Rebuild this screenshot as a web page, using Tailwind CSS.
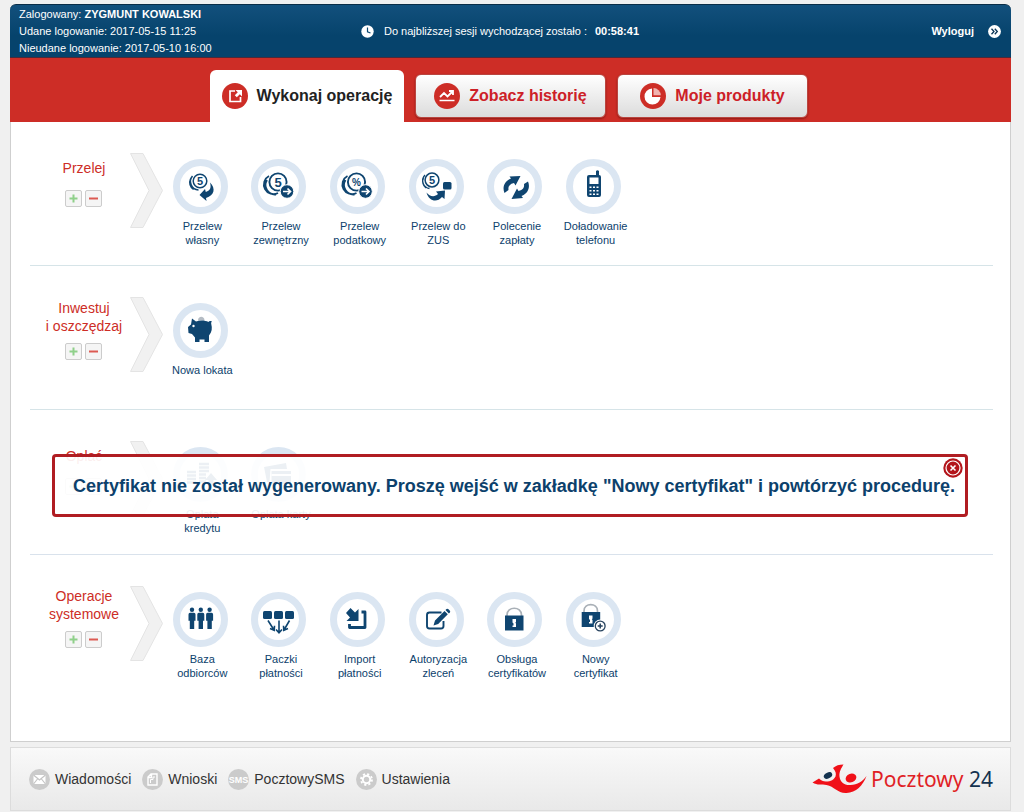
<!DOCTYPE html>
<html lang="pl">
<head>
<meta charset="utf-8">
<meta name="viewport" content="width=device-width, initial-scale=1">
<title>Pocztowy24</title>
<script src="https://cdn.jsdelivr.net/npm/@tailwindcss/browser@4"></script>
</head>
<body class="min-h-screen bg-[#f0f0f0] pt-1 pr-[13px] pl-2.5 font-['Liberation_Sans',Arial,sans-serif]">

<svg class="hidden" aria-hidden="true">
  <symbol id="ring" viewBox="0 0 55 55"><circle cx="27.5" cy="27.5" r="24" fill="#fff" stroke="#dbe6f2" stroke-width="7"/></symbol>
  <symbol id="chevron" viewBox="0 0 33 75"><path d="M.5.5H13L32.500 37.500 13 74.500H.5L19 37.500Z" fill="#f1f1f1" stroke="#e4e4e4"/></symbol>
  <symbol id="plus" viewBox="0 0 17 17"><path d="M8.500 4.500v8M4.500 8.500h8" stroke="#8fd08a" stroke-width="2"/></symbol>
  <symbol id="minus" viewBox="0 0 17 17"><path d="M4 8.500h9" stroke="#dc5a52" stroke-width="2"/></symbol>
</svg>

<div class="relative">
  <header class="grid min-h-[54px] grid-cols-[1fr_auto_1fr] items-center rounded-t-md border-t border-b border-t-[#0a2d47] border-b-[#4b2a3a] bg-linear-to-b from-[#12507c] to-[#06436c] to-60% pr-2.5 pl-[9px] text-[11px] text-white">
    <div class="leading-[17px]">
      <p>Zalogowany: <b>ZYGMUNT KOWALSKI</b></p>
      <p>Udane logowanie: 2017-05-15 11:25</p>
      <p>Nieudane logowanie: 2017-05-10 16:00</p>
    </div>
    <div class="flex items-center pr-5">
      <svg class="mr-2.5 size-[13px]" viewBox="0 0 13 13"><circle cx="6.500" cy="6.500" r="6.200" fill="#fff"/><path d="M6.500 2.500v4.300l3 1.200" fill="none" stroke="#0a4871" stroke-width="1.200"/></svg>
      <span class="mr-2">Do najbliższej sesji wychodzącej zostało :</span>
      <b>00:58:41</b>
    </div>
    <a href="#" class="flex items-center gap-[14px] justify-self-end font-bold">Wyloguj
      <svg class="size-[13px]" viewBox="0 0 13 13"><circle cx="6.500" cy="6.500" r="6.400" fill="#fff"/><path d="M3.500 3.700 6 6.500 3.500 9.300M6.800 3.700 9.300 6.500 6.800 9.300" fill="none" stroke="#0a3556" stroke-width="1.300"/></svg>
    </a>
  </header>

  <nav class="flex min-h-16 items-start justify-center gap-[11px] bg-[#cd2d26] pr-[3px] text-base font-bold text-[#cd2027]">
    <a href="#" class="mt-3 flex h-[52px] w-[194px] items-center justify-center gap-[9px] rounded-t-md bg-white text-[#222]">
      <svg class="size-[26px]" viewBox="0 0 26 26"><circle cx="13" cy="13" r="13" fill="#cd2d26"/><path d="M13 8H8v10.500h10.500V14" fill="none" stroke="#fff" stroke-width="1.700"/><path d="M13.500 7H20v6.500l-2.200-2.200-3 3-2-2 3-3Z" fill="#fff"/></svg>
      Wykonaj operację</a>
    <a href="#" class="mt-4 flex h-11 w-[191px] items-center justify-center gap-[9px] rounded-md border border-[#b9453f] bg-linear-to-b from-white to-[#dcdcdc] shadow-[0_1px_2px_#8d1a15]">
      <svg class="size-[26px]" viewBox="0 0 26 26"><circle cx="13" cy="13" r="13" fill="#cd2d26"/><path d="m6 14 4-4 3.500 3.500L18.500 8.500M15 8h4v4" fill="none" stroke="#fff" stroke-width="1.800"/><path d="M5.500 17.500h15" stroke="#fff" stroke-width="1.500"/></svg>
      Zobacz historię</a>
    <a href="#" class="mt-4 flex h-11 w-[191px] items-center justify-center gap-[9px] rounded-md border border-[#b9453f] bg-linear-to-b from-white to-[#dcdcdc] shadow-[0_1px_2px_#8d1a15]">
      <svg class="size-[26px]" viewBox="0 0 26 26"><circle cx="13" cy="13" r="13" fill="#cd2d26"/><path d="M12 5.500a8 8 0 1 0 8.500 8.500H12Z" fill="#fff"/><path d="M13.500 5a7.500 7.500 0 0 1 7.300 7.300h-7.300Z" fill="#f0b3b0"/></svg>
      Moje produkty</a>
  </nav>

  <main class="border border-t-0 border-[#cfcfcf] bg-white pr-[17px] pb-[42px] pl-[19px] text-[11px] leading-[14px] text-[#0c416c]">
    <section class="flex min-h-36 border-b border-[#d6e4e8]">
      <div class="w-[100px] shrink-0 pt-[37px] pl-2 text-center">
        <h2 class="text-sm leading-[18px] text-[#cd2d26]">Przelej</h2>
        <div class="mt-[13px] flex justify-center gap-[3px] pr-0.5">
          <button type="button" aria-label="Dodaj" class="size-[17px] rounded-xs border border-[#ccc] bg-[#f5f5f5]"><svg class="-m-px size-[17px]"><use href="#plus"/></svg></button>
          <button type="button" aria-label="Usuń" class="size-[17px] rounded-xs border border-[#ccc] bg-[#f5f5f5]"><svg class="-m-px size-[17px]"><use href="#minus"/></svg></button>
        </div>
      </div>
      <svg class="mt-[31px] h-[75px] w-[33px] shrink-0"><use href="#chevron"/></svg>
      <ul class="-ml-0.5 grid w-[472px] grid-cols-6 pt-[37px] text-center">
        <li><a href="#" class="flex flex-col items-center gap-[5px]">
          <svg class="size-[55px]" viewBox="0 0 55 55"><use href="#ring"/><circle cx="27" cy="22" r="6.800" fill="#fff" stroke="#0f4570" stroke-width="1.500"/><path d="M19.500 17a8.500 8.500 0 0 0 6 14M17.500 20a8.500 8.500 0 0 0 3 10.500" fill="none" stroke="#0f4570" stroke-width="1.500"/><text x="27" y="26" font-size="11" font-weight="bold" fill="#0f4570" text-anchor="middle">5</text><path d="M37 23.500c6 6 4.500 13-4 15.500l.5 3-7-6 5.500-6 .8 3c5-1.500 5.500-5 4.200-9.500Z" fill="#0f4570"/></svg>
          <span class="pl-1">Przelew<br>własny</span></a></li>
        <li><a href="#" class="flex flex-col items-center gap-[5px]">
          <svg class="size-[55px]" viewBox="0 0 55 55"><use href="#ring"/><path d="M18 17a9.500 9.500 0 0 0 9 17M16 21a9.500 9.500 0 0 0 9 14.500" fill="none" stroke="#0f4570" stroke-width="1.800"/><circle cx="27" cy="23" r="8.600" fill="#fff" stroke="#0f4570" stroke-width="1.900"/><text x="27" y="27.500" font-size="13" font-weight="bold" fill="#0f4570" text-anchor="middle">5</text><circle cx="36" cy="32.500" r="6.800" fill="#0f4570" stroke="#fff"/><path d="M32 32.500h7M36.500 29.500l3 3-3 3" fill="none" stroke="#fff" stroke-width="1.700"/></svg>
          <span class="pl-1">Przelew<br>zewnętrzny</span></a></li>
        <li><a href="#" class="flex flex-col items-center gap-[5px]">
          <svg class="size-[55px]" viewBox="0 0 55 55"><use href="#ring"/><path d="M17.500 17a9.500 9.500 0 0 0 9 17M15.500 21a9.500 9.500 0 0 0 9 14.500" fill="none" stroke="#0f4570" stroke-width="1.800"/><circle cx="26.500" cy="23" r="8.600" fill="#fff" stroke="#0f4570" stroke-width="1.900"/><text x="26.500" y="26.500" font-size="10" font-weight="bold" fill="#0f4570" text-anchor="middle">%</text><circle cx="35.500" cy="32.500" r="6.800" fill="#0f4570" stroke="#fff"/><path d="M31.500 32.500h7M36 29.500l3 3-3 3" fill="none" stroke="#fff" stroke-width="1.700"/></svg>
          <span class="pl-1">Przelew<br>podatkowy</span></a></li>
        <li><a href="#" class="flex flex-col items-center gap-[5px]">
          <svg class="size-[55px]" viewBox="0 0 55 55"><use href="#ring"/><path d="M16 16a8 8 0 0 0 4.500 13.500M14.500 19a8 8 0 0 0 2.500 10" fill="none" stroke="#0f4570" stroke-width="1.300"/><circle cx="23" cy="21" r="6.900" fill="#fff" stroke="#0f4570" stroke-width="1.500"/><text x="23" y="24.800" font-size="11" font-weight="bold" fill="#0f4570" text-anchor="middle">5</text><rect x="34" y="23" width="8.500" height="7.500" rx="1.500" fill="#0f4570"/><path d="M17.500 33.500c3 4 8 5 11.500 1.500l-2-2.500 9-1-.5 8.500-2.500-2c-5 6-13 4.500-15.500-4.500Z" fill="#0f4570"/></svg>
          <span class="pl-1">Przelew do<br>ZUS</span></a></li>
        <li><a href="#" class="flex flex-col items-center gap-[5px]">
          <svg class="size-[55px]" viewBox="0 0 55 55"><use href="#ring"/><path d="M17.500 34c-2.500-6 0-12 6.500-14.500L22.500 17.500l11-.5-5 9.500-1.500-2.500c-4.500 1-6 3.500-5.500 7Z" fill="#0f4570"/><path d="M41 22.500c2.500 6 0 12-6.500 14.500l1.500 2-11.500 1 5.500-10.500 1.500 2.500c4.500-1 6-3.500 5.500-7Z" fill="#0f4570"/></svg>
          <span class="pl-1">Polecenie<br>zapłaty</span></a></li>
        <li><a href="#" class="flex flex-col items-center gap-[5px]">
          <svg class="size-[55px]" viewBox="0 0 55 55"><use href="#ring"/><path d="M30 17v-5q1.500-1.500 3 0v4q2 0 2 2v18q0 2-2 2H23q-2 0-2-2V18q0-2 2-2h7Z" fill="#0f4570"/><path d="M23.500 18.500h9v6.500h-9ZM23.500 27.500h2v1.500h-2Zm3.500 0h2v1.500h-2Zm3.500 0h2v1.500h-2ZM23.500 31h2v1.500h-2Zm3.500 0h2v1.500h-2Zm3.500 0h2v1.500h-2Zm-7 3.500h2V36h-2Zm3.500 0h2V36h-2Zm3.500 0h2V36h-2Z" fill="#fff"/></svg>
          <span class="pl-1">Doładowanie<br>telefonu</span></a></li>
      </ul>
    </section>

    <section class="flex min-h-36 border-b border-[#d6e4e8]">
      <div class="w-[100px] shrink-0 pt-[33px] pl-2 text-center">
        <h2 class="text-sm leading-[18px] text-[#cd2d26]">Inwestuj<br>i oszczędzaj</h2>
        <div class="mt-2 flex justify-center gap-[3px] pr-0.5">
          <button type="button" aria-label="Dodaj" class="size-[17px] rounded-xs border border-[#ccc] bg-[#f5f5f5]"><svg class="-m-px size-[17px]"><use href="#plus"/></svg></button>
          <button type="button" aria-label="Usuń" class="size-[17px] rounded-xs border border-[#ccc] bg-[#f5f5f5]"><svg class="-m-px size-[17px]"><use href="#minus"/></svg></button>
        </div>
      </div>
      <svg class="mt-[31px] h-[75px] w-[33px] shrink-0"><use href="#chevron"/></svg>
      <ul class="-ml-0.5 grid w-[472px] grid-cols-6 pt-[37px] text-center">
        <li><a href="#" class="flex flex-col items-center gap-[5px]">
          <svg class="size-[55px]" viewBox="0 0 55 55"><use href="#ring"/><path d="M25 17.500c0-5 6.500-5 6.500 0Z" fill="#b5bcc4"/><path d="M19 15.500l4 3c4-1.500 9-1.500 12.500.5.500-1 2.500-1.500 3.500-.5-.5.500-1 1-.8 2.200 1.200 4.300.8 8.300-2.200 11.800v6.500h-4.500V36.500h-5V39H22V34.500l-3-3.500-3.500-1L15 24l3-2.500Z" fill="#0f4570"/><circle cx="20.500" cy="23" r="1.200" fill="#fff"/></svg>
          <span class="pl-1 whitespace-nowrap">Nowa lokata</span></a></li>
      </ul>
    </section>

    <section class="flex min-h-[145px] border-b border-[#d9e2ec]">
      <div class="w-[100px] shrink-0 pt-[37px] pl-2 text-center">
        <h2 class="text-sm leading-[18px] text-[#cd2d26]">Opłać</h2>
        <div class="mt-[13px] flex justify-center gap-[3px] pr-0.5">
          <button type="button" aria-label="Dodaj" class="size-[17px] rounded-xs border border-[#ccc] bg-[#f5f5f5]"><svg class="-m-px size-[17px]"><use href="#plus"/></svg></button>
          <button type="button" aria-label="Usuń" class="size-[17px] rounded-xs border border-[#ccc] bg-[#f5f5f5]"><svg class="-m-px size-[17px]"><use href="#minus"/></svg></button>
        </div>
      </div>
      <svg class="mt-[31px] h-[75px] w-[33px] shrink-0"><use href="#chevron"/></svg>
      <ul class="-ml-0.5 grid w-[472px] grid-cols-6 pt-[37px] text-center">
        <li><a href="#" class="flex flex-col items-center gap-[5px]">
          <svg class="size-[55px]" viewBox="0 0 55 55"><use href="#ring"/><path d="M14 25h9M14 28.500h9M14 32h9M14 35.500h9M26 17h10M26 20.500h10M26 24h10M26 27.500h7M26 31h7M26 34.500h7" stroke="#0f4570" stroke-width="2.500"/><path d="m38 26 6 7h-3.500v5h-5v-5H32Z" fill="#0f4570"/></svg>
          <span class="pl-1">Opłata<br>kredytu</span></a></li>
        <li><a href="#" class="flex flex-col items-center gap-[5px]">
          <svg class="size-[55px]" viewBox="0 0 55 55"><use href="#ring"/><path d="m13 20 22-4 1 6H19.500l-1 13H16Z" fill="#0f4570"/><path d="M20.500 24H40v13H20.500Z" fill="#0f4570"/><path d="M20.500 28H40" stroke="#fff" stroke-width="2"/></svg>
          <span class="pl-1 whitespace-nowrap">Opłata karty</span></a></li>
      </ul>
    </section>

    <section class="flex min-h-36">
      <div class="w-[100px] shrink-0 pt-8 pl-2 text-center">
        <h2 class="text-sm leading-[18px] text-[#cd2d26]">Operacje<br>systemowe</h2>
        <div class="mt-2 flex justify-center gap-[3px] pr-0.5">
          <button type="button" aria-label="Dodaj" class="size-[17px] rounded-xs border border-[#ccc] bg-[#f5f5f5]"><svg class="-m-px size-[17px]"><use href="#plus"/></svg></button>
          <button type="button" aria-label="Usuń" class="size-[17px] rounded-xs border border-[#ccc] bg-[#f5f5f5]"><svg class="-m-px size-[17px]"><use href="#minus"/></svg></button>
        </div>
      </div>
      <svg class="mt-[31px] h-[75px] w-[33px] shrink-0"><use href="#chevron"/></svg>
      <ul class="-ml-0.5 grid w-[472px] grid-cols-6 pt-[37px] text-center">
        <li><a href="#" class="flex flex-col items-center gap-[5px]">
          <svg class="size-[55px]" viewBox="0 0 55 55"><use href="#ring"/><g fill="#0f4570"><circle cx="19" cy="17.800" r="2.200"/><path d="M17 20.700h4q1.500 0 1.500 1.700v6.300h-1.300V37h-4.400v-8.300h-1.300v-6.300q0-1.700 1.500-1.700Z"/><circle cx="27.800" cy="17.800" r="2.200"/><path d="M25.800 20.700h4q1.500 0 1.500 1.700v6.300H30V37h-4.400v-8.300h-1.300v-6.300q0-1.700 1.500-1.700Z"/><circle cx="36.600" cy="17.800" r="2.200"/><path d="M34.600 20.700h4q1.500 0 1.500 1.700v6.300h-1.300V37h-4.400v-8.300h-1.300v-6.300q0-1.700 1.500-1.700Z"/></g></svg>
          <span class="pl-1">Baza<br>odbiorców</span></a></li>
        <li><a href="#" class="flex flex-col items-center gap-[5px]">
          <svg class="size-[55px]" viewBox="0 0 55 55"><use href="#ring"/><g fill="#0f4570"><rect x="12" y="19" width="9" height="8" rx="1.500"/><rect x="23" y="19" width="9" height="8" rx="1.500"/><rect x="34" y="19" width="9" height="8" rx="1.500"/></g><path d="m17 28.500 6 9.500M19 36.500l4.200 1.800.3-4.500M28 28.500v12M25 37.500l3 3.300 3-3.300M38.500 28.500 33 38M32.500 33.800l.3 4.500 4.200-1.800" fill="none" stroke="#0f4570" stroke-width="1.600"/></svg>
          <span class="pl-1">Paczki<br>płatności</span></a></li>
        <li><a href="#" class="flex flex-col items-center gap-[5px]">
          <svg class="size-[55px]" viewBox="0 0 55 55"><use href="#ring"/><path d="M31.500 20H35v15.500H19.500V32" fill="none" stroke="#0f4570" stroke-width="2.800" stroke-linejoin="round"/><path d="m20.500 16 4.500 4.500 3.500-3.500v12H16.500l3.500-3.500-4-4.500Z" fill="#0f4570"/></svg>
          <span class="pl-1">Import<br>płatności</span></a></li>
        <li><a href="#" class="flex flex-col items-center gap-[5px]">
          <svg class="size-[55px]" viewBox="0 0 55 55"><use href="#ring"/><path d="M32.500 20.500H20.500q-2.500 0-2.500 2.500v11q0 2.500 2.500 2.500h11.500q2.500 0 2.500-2.500v-5" fill="none" stroke="#0f4570" stroke-width="1.900"/><path d="m24.500 33.500 1.500-5 9.500-9.500 3.300 3.300-9.600 9.600ZM36.500 18l1-1q1-.8 2 .2l1.200 1.200q1 1 .2 2l-1 1Z" fill="#0f4570"/></svg>
          <span class="pl-1">Autoryzacja<br>zleceń</span></a></li>
        <li><a href="#" class="flex flex-col items-center gap-[5px]">
          <svg class="size-[55px]" viewBox="0 0 55 55"><use href="#ring"/><path d="M20 24v-1c0-9 14.500-9 14.500 0v1" fill="none" stroke="#a9b0b7" stroke-width="1.700"/><path d="M18 23.500h18.500v15H18Z" fill="#0f4570"/><path d="M25.500 27h3.500v3l-.7.800.7.800V35h-3.500v-1.500h1v-2l-1-1Z" fill="#fff"/></svg>
          <span class="pl-1">Obsługa<br>certyfikatów</span></a></li>
        <li><a href="#" class="flex flex-col items-center gap-[5px]">
          <svg class="size-[55px]" viewBox="0 0 55 55"><use href="#ring"/><path d="M18 20v-1c0-8.500 13.500-8.500 13.500 0v1" fill="none" stroke="#a9b0b7" stroke-width="1.700"/><path d="M15.700 20h18.500v15H15.700Z" fill="#0f4570"/><path d="M23 23.500h3.500v3l-.7.800.7.800v3.400H23V30h1v-2l-1-1Z" fill="#fff"/><circle cx="34.200" cy="34" r="6.500" fill="#fff"/><circle cx="34.200" cy="34" r="4.900" fill="#fff" stroke="#27435e" stroke-width="1.300"/><path d="M31.700 34h5M34.200 31.500v5" stroke="#27435e" stroke-width="1.500"/></svg>
          <span class="pl-1">Nowy<br>certyfikat</span></a></li>
      </ul>
    </section>
  </main>

  <div role="alertdialog" aria-labelledby="alert-text" class="absolute top-[450px] right-[43px] left-[42px] flex min-h-[63px] items-center rounded-sm border-3 border-[#ac1116]/95 bg-white/92 pl-[18px]">
    <p id="alert-text" class="text-lg font-bold text-[#0c416c]">Certyfikat nie został wygenerowany. Proszę wejść w zakładkę "Nowy certyfikat" i powtórzyć procedurę.</p>
    <button type="button" aria-label="Zamknij" class="absolute top-px right-0.5 size-5">
      <svg class="size-5" viewBox="0 0 20 20"><circle cx="10" cy="10" r="9.700" fill="#b3151b"/><circle cx="10" cy="10" r="7" fill="none" stroke="#fff" stroke-width="1.200"/><path d="m7.500 7.500 5 5m0-5-5 5" stroke="#fff" stroke-width="1.600"/></svg>
    </button>
  </div>
</div>

<footer class="mt-[5px] flex min-h-16 items-center justify-between border border-[#dcdcdc] bg-linear-to-b from-[#f9f9f9] to-[#e9e9e9] pr-[17px] pl-[18px]">
  <nav class="flex gap-[11px] text-sm text-[#333]">
    <a href="#" class="flex items-center gap-[5px]"><svg class="size-[21px]" viewBox="0 0 21 21"><circle cx="10.500" cy="10.500" r="10.500" fill="#cbcbcb"/><path d="M4.500 6h12v9h-12Z" fill="#fff"/><path d="m4.500 6 6 5 6-5M4.500 15l4-5m4 0 4 5" fill="none" stroke="#c4c4c4" stroke-width="1.200"/></svg>Wiadomości</a>
    <a href="#" class="flex items-center gap-[5px]"><svg class="size-[21px]" viewBox="0 0 21 21"><circle cx="10.500" cy="10.500" r="10.500" fill="#cbcbcb"/><path d="M9 5h6v11H6V8Zm.5 0v3.500H6" fill="none" stroke="#fff" stroke-width="1.400"/><path d="M8.500 14v-3.500H11V8h2" fill="none" stroke="#fff"/></svg>Wnioski</a>
    <a href="#" class="flex items-center gap-[5px]"><svg class="size-[21px] overflow-visible" viewBox="0 0 21 21"><circle cx="10.500" cy="10.500" r="10.500" fill="#cbcbcb"/><text x="10.500" y="13.800" font-size="9" font-weight="bold" fill="#fff" text-anchor="middle">SMS</text></svg>PocztowySMS</a>
    <a href="#" class="flex items-center gap-[5px]"><svg class="size-[21px]" viewBox="0 0 21 21"><circle cx="10.500" cy="10.500" r="10.500" fill="#cbcbcb"/><circle cx="10.500" cy="10.500" r="3.700" fill="none" stroke="#fff" stroke-width="2"/><circle cx="10.500" cy="10.500" r="5.500" fill="none" stroke="#fff" stroke-width="1.800" stroke-dasharray="2.160 2.160"/></svg>Ustawienia</a>
  </nav>
  <a href="#" class="flex items-center gap-1 font-['Noto_Sans','Open_Sans',sans-serif] text-[21px] leading-7 text-[#e01f26]">
    <svg class="h-8 w-[55px]" viewBox="0 0 55 32"><path d="M.5 19.500 7 15.500C9 17.500 11 18.500 14 18.500c5 0 8-2 9.500-5C24.500 10.500 23.500 8 21 5c3-2.500 6-3.500 10.500-3.500-2 3.500-4.500 7-4 12 .5 5.500 5 9 11 8.500 7-.5 12-3.500 16-9-3.500 9.500-10.500 16.500-20 17-9 .5-12-6.500-20-8-5-.5-9 .5-14-2.500Z" fill="#f01018"/><ellipse cx="16" cy="12.500" rx="4.500" ry="2.900" transform="rotate(-28 16 12.500)" fill="#14324f"/><ellipse cx="39" cy="15" rx="5.500" ry="4.300" transform="rotate(-20 39 15)" fill="#f01018"/></svg>
    <span>Pocztowy <span class="text-[#14324f]">24</span></span>
  </a>
</footer>
</body>
</html>
